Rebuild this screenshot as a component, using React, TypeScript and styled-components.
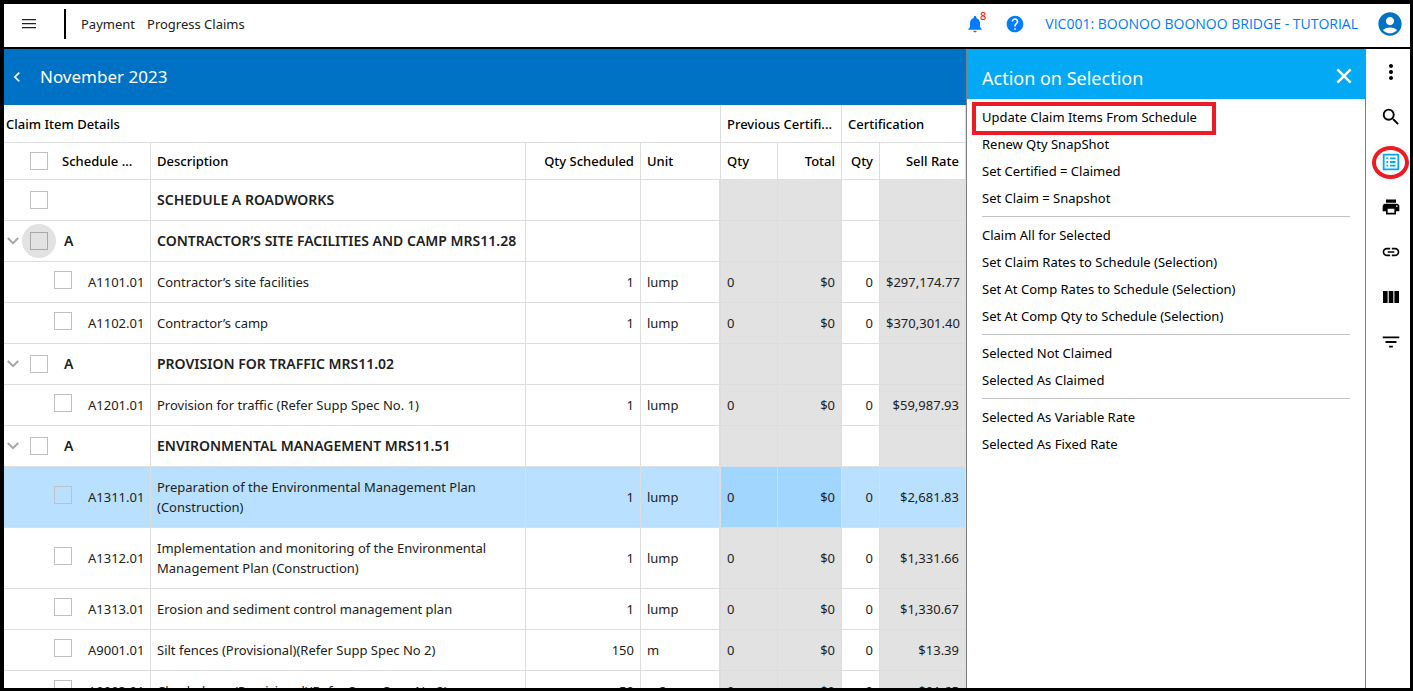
import React from "react";
import styled, { createGlobalStyle, css } from "styled-components";
import {
  MdAccountCircle,
  MdChevronLeft,
  MdFilterList,
  MdHelp,
  MdLink,
  MdListAlt,
  MdMoreVert,
  MdNotifications,
  MdPrint,
  MdSearch,
} from "react-icons/md";

const line = "#dddddd";
const marker = "#ed1c24";

const GlobalStyle = createGlobalStyle`
  *, *::before, *::after { box-sizing: border-box; }
  body {
    margin: 0;
    font-family: "Noto Sans", "Open Sans", sans-serif;
    font-size: 13px;
    line-height: 20px;
    color: #212121;
  }
  button {
    font: inherit;
    color: inherit;
    background: none;
    border: 0;
    padding: 0;
    cursor: pointer;
  }
  svg { display: block; }
`;

const Frame = styled.div`
  display: flex;
  flex-direction: column;
  height: 100vh;
  overflow: hidden;
  background: #fff;
  border: solid #000;
  border-width: 4px 3px 3px 4px;
`;

const TopBar = styled.header`
  display: flex;
  flex: none;
  align-items: center;
  height: 45px;
  padding: 0 6px 4px 18px;
  border-bottom: 2px solid #000;
`;

const Divider = styled.span`
  width: 2px;
  height: 30px;
  margin: 0 15px 0 28px;
  background: #000;
`;

const Crumbs = styled.nav`
  display: flex;
  flex: 1;
  gap: 12px;
  a {
    color: #212121;
    text-decoration: none;
  }
`;

const TopActions = styled.div`
  display: flex;
  align-items: center;
  color: #007bff;
`;

const BellButton = styled.button`
  position: relative;
  margin-right: 20px;
`;

const Badge = styled.span`
  position: absolute;
  top: -5px;
  right: -1px;
  color: #f00;
  font-size: 11px;
  line-height: 14px;
`;

const Project = styled.a`
  margin: 0 18px 0 20px;
  color: #007bff;
  font-family: "Open Sans", "Noto Sans", sans-serif;
  font-size: 14px;
  text-decoration: none;
`;

const AvatarButton = styled.button`
  color: #0072c6;
`;

const Body = styled.div`
  display: flex;
  flex: 1;
  min-height: 0;
`;

const Main = styled.main`
  flex: 1;
  min-width: 0;
  overflow: hidden;
`;

const PeriodBar = styled.div`
  display: flex;
  align-items: center;
  gap: 13px;
  height: 56px;
  padding-left: 3px;
  color: #fff;
  background: #0072c6;
`;

const PeriodTitle = styled.h1`
  margin: 0;
  font-size: 17px;
  font-weight: 400;
  line-height: 24px;
`;

const Grid = styled.table`
  width: 100%;
  table-layout: fixed;
  border-collapse: separate;
  border-spacing: 0;
`;

const Col = styled.col<{ $w?: number }>`
  ${(p) => p.$w && `width: ${p.$w}px;`}
`;

const HeadCell = styled.th<{ $right?: boolean; $flush?: boolean }>`
  height: 37px;
  padding: 0 6px;
  padding-left: ${(p) => (p.$flush ? 2 : 6)}px;
  overflow: hidden;
  color: #000;
  font-weight: 500;
  text-align: ${(p) => (p.$right ? "right" : "left")};
  text-overflow: ellipsis;
  white-space: nowrap;
  border-right: 1px solid ${line};
  border-bottom: 1px solid ${line};
`;

const GroupRow = styled.tr`
  ${HeadCell} {
    height: 38px;
  }
`;

const Cell = styled.td<{ $right?: boolean; $shade?: boolean; $edge?: boolean }>`
  height: 41px;
  padding: 10px 6px;
  text-align: ${(p) => (p.$right ? "right" : "left")};
  background: ${(p) => (p.$shade ? "#e2e2e2" : "transparent")};
  border-right: ${(p) => (p.$edge ? 2 : 1)}px solid ${line};
  border-bottom: 1px solid ${line};
`;

const KeyCell = styled(Cell)`
  padding: 0;
`;

const Row = styled.tr<{ $group?: boolean; $selected?: boolean }>`
  font-size: ${(p) => (p.$group ? 14 : 13)}px;
  font-weight: ${(p) => (p.$group ? 600 : 400)};
  ${(p) =>
    p.$selected &&
    css`
      background: #b9e1ff;
      ${Cell} {
        background: transparent;
      }
      ${Cell}:nth-child(5),
      ${Cell}:nth-child(6) {
        background: #a0d6ff;
      }
    `}
`;

const Key = styled.div<{ $indent: number; $gap?: number }>`
  display: flex;
  align-items: center;
  gap: ${(p) => p.$gap ?? 16}px;
  padding-left: ${(p) => p.$indent}px;
`;

const Toggle = styled.button`
  flex: none;
  width: 18px;
  margin-right: -8px;
  padding-left: 3px;
`;

const Check = styled.input<{ $raised?: boolean }>`
  flex: none;
  width: 18px;
  height: 18px;
  margin: 0 0 ${(p) => (p.$raised ? 4 : 0)}px;
  appearance: none;
  border: 1px solid #c0c0c0;
`;

const Halo = styled.span`
  display: flex;
  flex: none;
  align-items: center;
  justify-content: center;
  width: 34px;
  height: 34px;
  margin: 0 -8px;
  background: #e2e2e2;
  border-radius: 50%;
  input {
    border-color: #a8a8a8;
  }
`;

const Panel = styled.aside`
  flex: none;
  width: 400px;
  border: solid #808080;
  border-width: 0 1px;
`;

const PanelHead = styled.div`
  display: flex;
  align-items: center;
  justify-content: space-between;
  height: 50px;
  padding: 8px 13px 0 15px;
  color: #fff;
  background: #03a9f4;
  button {
    margin-bottom: 4px;
  }
`;

const PanelTitle = styled.h2`
  margin: 0;
  font-size: 18px;
  font-weight: 400;
  line-height: 24px;
`;

const Menu = styled.div`
  padding: 4px 15px;
  color: #000;
`;

const MenuGroup = styled.ul`
  margin: 0;
  padding: 0;
  list-style: none;
  & + & {
    margin-top: 5px;
    padding-top: 4px;
    border-top: 1px solid #c4c4c4;
  }
`;

const MenuItem = styled.li`
  position: relative;
  display: flex;
`;

const MenuButton = styled.button`
  height: 27px;
`;

const BoxMark = styled.span`
  position: absolute;
  top: -1px;
  left: -10px;
  width: 244px;
  height: 33px;
  border: 4px solid ${marker};
  pointer-events: none;
`;

const Tools = styled.div`
  display: flex;
  flex: none;
  flex-direction: column;
  align-items: center;
  gap: 21px;
  width: 44px;
  padding: 11px 0 0 6px;
  color: #000;
`;

const ToolButton = styled.button<{ $active?: boolean }>`
  position: relative;
  display: grid;
  place-items: center;
  width: 24px;
  height: 24px;
  color: ${(p) => (p.$active ? "#03a9f4" : "#000")};
`;

const RingMark = styled.span`
  position: absolute;
  top: -4px;
  left: -7px;
  width: 37px;
  height: 33px;
  border: 4px solid ${marker};
  border-radius: 50%;
  pointer-events: none;
`;

type Item = {
  code: string;
  text: string;
  qty?: string;
  unit?: string;
  rate?: string;
  selected?: boolean;
  focused?: boolean;
};

const items: Item[] = [
  { code: "", text: "SCHEDULE A ROADWORKS" },
  { code: "A", text: "CONTRACTOR’S SITE FACILITIES AND CAMP MRS11.28", focused: true },
  { code: "A1101.01", text: "Contractor’s site facilities", qty: "1", unit: "lump", rate: "$297,174.77" },
  { code: "A1102.01", text: "Contractor’s camp", qty: "1", unit: "lump", rate: "$370,301.40" },
  { code: "A", text: "PROVISION FOR TRAFFIC MRS11.02" },
  { code: "A1201.01", text: "Provision for traffic (Refer Supp Spec No. 1)", qty: "1", unit: "lump", rate: "$59,987.93" },
  { code: "A", text: "ENVIRONMENTAL MANAGEMENT MRS11.51" },
  { code: "A1311.01", text: "Preparation of the Environmental Management Plan (Construction)", qty: "1", unit: "lump", rate: "$2,681.83", selected: true },
  { code: "A1312.01", text: "Implementation and monitoring of the Environmental Management Plan (Construction)", qty: "1", unit: "lump", rate: "$1,331.66" },
  { code: "A1313.01", text: "Erosion and sediment control management plan", qty: "1", unit: "lump", rate: "$1,330.67" },
  { code: "A9001.01", text: "Silt fences (Provisional)(Refer Supp Spec No 2)", qty: "150", unit: "m", rate: "$13.39" },
  { code: "A9003.01", text: "Check dams (Provisional)(Refer Supp Spec No 2)", qty: "50", unit: "m2", rate: "$91.65" },
];

const menu = [
  ["Update Claim Items From Schedule", "Renew Qty SnapShot", "Set Certified = Claimed", "Set Claim = Snapshot"],
  [
    "Claim All for Selected",
    "Set Claim Rates to Schedule (Selection)",
    "Set At Comp Rates to Schedule (Selection)",
    "Set At Comp Qty to Schedule (Selection)",
  ],
  ["Selected Not Claimed", "Selected As Claimed"],
  ["Selected As Variable Rate", "Selected As Fixed Rate"],
];

const MenuIcon = () => (
  <svg width="14" height="10" viewBox="0 0 14 10" fill="#222">
    <path d="M0 0h14v1.3H0zM0 4h14v1.3H0zM0 8h14v1.3H0z" />
  </svg>
);

const ToggleIcon = () => (
  <svg width="12" height="8" viewBox="0 0 12 8" fill="none" stroke="#a6a6a6" strokeWidth="2">
    <path d="M0.8 1l5.2 5.2L11.2 1" />
  </svg>
);

const CloseIcon = () => (
  <svg width="16" height="16" viewBox="0 0 16 16" fill="none" stroke="#fff" strokeWidth="2.6">
    <path d="M1.4 1.4l13.2 13.2M14.6 1.4L1.4 14.6" />
  </svg>
);

const ColumnsIcon = () => (
  <svg width="16" height="12" viewBox="0 0 16 12" fill="currentColor">
    <path d="M0 0h4.6v12H0zM5.7 0h4.6v12H5.7zM11.4 0H16v12h-4.6z" />
  </svg>
);

const tools = [
  { label: "More", icon: <MdMoreVert size={24} /> },
  { label: "Search", icon: <MdSearch size={22} /> },
  { label: "Actions", icon: <MdListAlt size={22} />, active: true },
  { label: "Print", icon: <MdPrint size={20} /> },
  { label: "Link", icon: <MdLink size={20} /> },
  { label: "Columns", icon: <ColumnsIcon /> },
  { label: "Filter", icon: <MdFilterList size={22} /> },
];

function ItemRow({ item }: { item: Item }) {
  const group = !item.unit;
  const label = `Select ${item.text}`;
  return (
    <Row $group={group} $selected={item.selected}>
      <KeyCell>
        {group ? (
          <Key $indent={item.code ? 0 : 26}>
            {item.code && (
              <Toggle aria-label="Collapse">
                <ToggleIcon />
              </Toggle>
            )}
            {item.focused ? (
              <Halo>
                <Check type="checkbox" aria-label={label} />
              </Halo>
            ) : (
              <Check type="checkbox" aria-label={label} />
            )}
            <span>{item.code}</span>
          </Key>
        ) : (
          <Key $indent={50}>
            <Check type="checkbox" aria-label={label} $raised />
            <span>{item.code}</span>
          </Key>
        )}
      </KeyCell>
      <Cell>{item.text}</Cell>
      <Cell $right>{item.qty}</Cell>
      <Cell $edge>{item.unit}</Cell>
      <Cell $shade>{group ? "" : "0"}</Cell>
      <Cell $shade $right>{group ? "" : "$0"}</Cell>
      <Cell $right>{group ? "" : "0"}</Cell>
      <Cell $shade $right>{item.rate}</Cell>
    </Row>
  );
}

export default function App() {
  return (
    <Frame>
      <GlobalStyle />
      <TopBar>
        <button aria-label="Menu">
          <MenuIcon />
        </button>
        <Divider />
        <Crumbs>
          <a href="#payment">Payment</a>
          <a href="#claims">Progress Claims</a>
        </Crumbs>
        <TopActions>
          <BellButton aria-label="Notifications">
            <MdNotifications size={20} />
            <Badge>8</Badge>
          </BellButton>
          <button aria-label="Help">
            <MdHelp size={20} />
          </button>
          <Project href="#project">VIC001: BOONOO BOONOO BRIDGE - TUTORIAL</Project>
          <AvatarButton aria-label="Account">
            <MdAccountCircle size={28} />
          </AvatarButton>
        </TopActions>
      </TopBar>
      <Body>
        <Main>
          <PeriodBar>
            <button aria-label="Back">
              <MdChevronLeft size={20} />
            </button>
            <PeriodTitle>November 2023</PeriodTitle>
          </PeriodBar>
          <Grid>
            <colgroup>
              <Col $w={147} />
              <Col />
              <Col $w={115} />
              <Col $w={80} />
              <Col $w={57} />
              <Col $w={64} />
              <Col $w={38} />
              <Col $w={86} />
            </colgroup>
            <thead>
              <GroupRow>
                <HeadCell colSpan={4} $flush>Claim Item Details</HeadCell>
                <HeadCell colSpan={2}>Previous Certifi...</HeadCell>
                <HeadCell colSpan={2}>Certification</HeadCell>
              </GroupRow>
              <tr>
                <HeadCell $flush>
                  <Key $indent={24} $gap={14}>
                    <Check type="checkbox" aria-label="Select all" />
                    <span>Schedule ...</span>
                  </Key>
                </HeadCell>
                <HeadCell>Description</HeadCell>
                <HeadCell $right>Qty Scheduled</HeadCell>
                <HeadCell>Unit</HeadCell>
                <HeadCell>Qty</HeadCell>
                <HeadCell $right>Total</HeadCell>
                <HeadCell $right>Qty</HeadCell>
                <HeadCell $right>Sell Rate</HeadCell>
              </tr>
            </thead>
            <tbody>
              {items.map((item) => (
                <ItemRow key={item.text} item={item} />
              ))}
            </tbody>
          </Grid>
        </Main>
        <Panel>
          <PanelHead>
            <PanelTitle>Action on Selection</PanelTitle>
            <button aria-label="Close">
              <CloseIcon />
            </button>
          </PanelHead>
          <Menu>
            {menu.map((group, g) => (
              <MenuGroup key={group[0]}>
                {group.map((label, i) => (
                  <MenuItem key={label}>
                    <MenuButton>{label}</MenuButton>
                    {g === 0 && i === 0 && <BoxMark />}
                  </MenuItem>
                ))}
              </MenuGroup>
            ))}
          </Menu>
        </Panel>
        <Tools>
          {tools.map((tool) => (
            <ToolButton key={tool.label} aria-label={tool.label} $active={tool.active}>
              {tool.icon}
              {tool.active && <RingMark />}
            </ToolButton>
          ))}
        </Tools>
      </Body>
    </Frame>
  );
}
